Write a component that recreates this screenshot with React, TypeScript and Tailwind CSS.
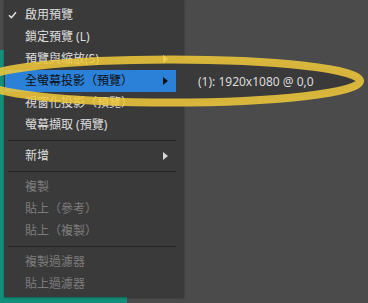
import React from "react";

const font = { fontFamily: '"Noto Sans", "Noto Sans CJK TC", sans-serif' };

function Arrow({ color }: { color: string }) {
  return (
    <svg width="5" height="8" viewBox="0 0 5 8" className="shrink-0">
      <polygon points="0,0 5,4 0,8" fill={color} />
    </svg>
  );
}

type Item =
  | { kind: "item"; label: string; check?: boolean; sub?: boolean; disabled?: boolean; active?: boolean }
  | { kind: "sep" };

const items: Item[] = [
  { kind: "item", label: "啟用預覽", check: true },
  { kind: "item", label: "鎖定預覽 (L)" },
  { kind: "item", label: "預覽與縮放(S)", sub: true },
  { kind: "item", label: "全螢幕投影（預覽）", sub: true, active: true },
  { kind: "item", label: "視窗化投影（預覽）" },
  { kind: "item", label: "螢幕擷取 (預覽)" },
  { kind: "sep" },
  { kind: "item", label: "新增", sub: true },
  { kind: "sep" },
  { kind: "item", label: "複製", disabled: true },
  { kind: "item", label: "貼上（參考）", disabled: true },
  { kind: "item", label: "貼上（複製）", disabled: true },
  { kind: "sep" },
  { kind: "item", label: "複製過濾器", disabled: true },
  { kind: "item", label: "貼上過濾器", disabled: true },
];

export default function App() {
  return (
    <div className="relative w-[368px] h-[303px] bg-[#4b4b4b] overflow-hidden flex" style={font}>
      <div className="w-[127px] h-full flex flex-col pt-[50px]">
        <div className="flex-1 bg-[#12907b]" />
      </div>

      <div className="absolute left-[4px] top-0 w-[180px] h-[297px] bg-[#3a3a3a] flex flex-col pt-[4px] shadow-[0_1px_2px_rgba(0,0,0,0.35)]">
        {items.map((it, i) =>
          it.kind === "sep" ? (
            <div key={i} className="h-[9px] flex items-center pl-[4px] pr-[8px]">
              <div className="h-px w-full bg-[#262626]" />
            </div>
          ) : (
            <div
              key={i}
              className={
                "h-[22px] flex items-center mr-[8px] ml-[1px] pl-[20px] pr-[8px] text-[12px] " +
                (it.active ? "bg-[#2b80d8] text-[#101010]" : it.disabled ? "text-[#7c7c7c]" : "text-[#dedede]")
              }
            >
              <span className="flex-1 whitespace-nowrap leading-none">{it.label}</span>
              {it.sub && <Arrow color={it.active ? "#111111" : "#d8d8d8"} />}
            </div>
          )
        )}
        <div className="absolute left-[4px] top-[11px]">
          <svg width="9" height="8" viewBox="0 0 9 8">
            <path d="M1 4.2 L3.4 6.6 L8 1.2" stroke="#e6e6e6" strokeWidth="1.4" fill="none" />
          </svg>
        </div>
      </div>

      <div className="absolute left-[184px] top-[60px] w-[180px] h-[44px] bg-[#3a3a3a] [clip-path:ellipse(189px_21.5px_at_-13px_21px)] flex items-center pl-[14px]">
        <span className="text-[12px] text-[#dcdcdc] whitespace-nowrap leading-none">(1): 1920x1080 @ 0,0</span>
      </div>

      <svg className="absolute inset-0 pointer-events-none" width="368" height="303" viewBox="0 0 368 303">
        <ellipse cx="171" cy="81" rx="189" ry="21.5" fill="none" stroke="#f0c93a" strokeWidth="8" opacity="0.86" />
      </svg>
    </div>
  );
}
